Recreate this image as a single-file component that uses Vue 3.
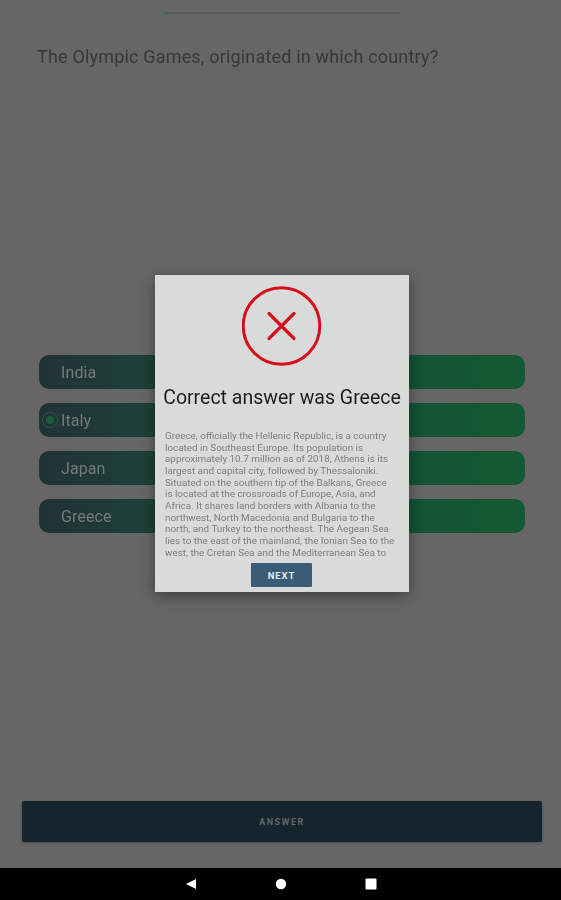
<script setup>
const options = [
  { label: 'India', selected: false },
  { label: 'Italy', selected: true },
  { label: 'Japan', selected: false },
  { label: 'Greece', selected: false },
]
const body = 'Greece, officially the Hellenic Republic, is a country located in Southeast Europe. Its population is approximately 10.7 million as of 2018, Athens is its largest and capital city, followed by Thessaloniki. Situated on the southern tip of the Balkans, Greece is located at the crossroads of Europe, Asia, and Africa. It shares land borders with Albania to the northwest, North Macedonia and Bulgaria to the north, and Turkey to the northeast. The Aegean Sea lies to the east of the mainland, the Ionian Sea to the west, the Cretan Sea and the Mediterranean Sea to'
</script>

<template>
  <div class="screen">
    <main class="page">
      <div class="progress"><span class="progress-fill"></span></div>
      <h1 class="question">The Olympic Games, originated in which country?</h1>
      <div class="options">
        <div v-for="o in options" :key="o.label" class="option">
          <span class="radio" :class="{ on: o.selected }"><i v-if="o.selected"></i></span>
          <span class="option-label">{{ o.label }}</span>
        </div>
      </div>
      <div class="answer">ANSWER</div>

      <div class="dialog">
        <svg class="fail" width="80" height="80" viewBox="0 0 80 80" aria-hidden="true">
          <circle cx="39.5" cy="40" r="38.3" fill="none" stroke="#d5101c" stroke-width="3" />
          <path d="M27 27.5 L52 52.5 M52 27.5 L27 52.5" fill="none" stroke="#d5101c" stroke-width="3.2" stroke-linecap="round" />
        </svg>
        <h2 class="title">Correct answer was Greece</h2>
        <div class="body-clip"><p class="body">{{ body }}</p></div>
        <div class="next">NEXT</div>
      </div>
    </main>
    <nav class="navbar">
      <svg width="12" height="12" viewBox="0 0 12 12" aria-hidden="true"><path d="M11 1 V11 L1 6 Z" fill="#fff" /></svg>
      <svg width="12" height="12" viewBox="0 0 12 12" aria-hidden="true"><circle cx="6" cy="6" r="5.2" fill="#fff" /></svg>
      <svg width="12" height="12" viewBox="0 0 12 12" aria-hidden="true"><rect x="0.5" y="0.5" width="11" height="11" rx="1" fill="#fff" /></svg>
    </nav>
  </div>
</template>

<style>
html, body { margin: 0; background: #000; }
</style>

<style scoped>
.screen {
  width: 561px;
  height: 900px;
  display: flex;
  flex-direction: column;
  font-family: Roboto, "Liberation Sans", sans-serif;
  overflow: hidden;
}
.page {
  position: relative;
  height: 868px;
  box-sizing: border-box;
  background: #666666;
  padding-top: 12px;
  display: flex;
  flex-direction: column;
}
.progress {
  width: 238px;
  height: 2px;
  margin-left: 162px;
  background: #595b5a;
  filter: blur(0.4px);
}
.progress-fill {
  display: block;
  width: 3px;
  height: 2px;
  background: #1f8a5c;
}
.question {
  margin: 30px 0 0 37px;
  font-size: 18px;
  line-height: 26px;
  font-weight: 400;
  letter-spacing: 0.18px;
  color: #383838;
  white-space: nowrap;
  filter: blur(0.6px);
}
.options {
  margin: 285px 36px 0 39px;
  display: flex;
  flex-direction: column;
  gap: 14px;
}
.option {
  height: 34px;
  border-radius: 10px;
  background: linear-gradient(90deg, #223236 0%, #1a4438 28%, #135a33 100%);
  display: flex;
  align-items: center;
  padding-left: 3px;
}
.radio {
  width: 16px;
  height: 16px;
  margin-right: 3px;
  box-sizing: border-box;
  border-radius: 50%;
  display: flex;
  align-items: center;
  justify-content: center;
}
.radio.on { border: 1.5px solid #1a5c3c; filter: blur(0.6px); }
.radio i {
  display: block;
  width: 8px;
  height: 8px;
  border-radius: 50%;
  background: #1a5c3c;
}
.option-label {
  font-size: 16px;
  color: #737a7b;
  letter-spacing: 0.1px;
  filter: blur(0.6px);
}
.answer {
  margin: 268px 19px 0 22px;
  height: 41px;
  border-radius: 2px;
  background: #16242d;
  box-shadow: 0 1px 3px rgba(0, 0, 0, 0.3);
  color: #5f676b;
  font-size: 9px;
  font-weight: 700;
  letter-spacing: 1.5px;
  display: flex;
  align-items: center;
  justify-content: center;
}
.dialog {
  position: absolute;
  left: 155px;
  top: 275px;
  width: 254px;
  height: 317px;
  box-sizing: border-box;
  padding-top: 11px;
  background: #d9dbda;
  box-shadow: 0 4px 14px rgba(0, 0, 0, 0.4);
  display: flex;
  flex-direction: column;
  align-items: center;
}
.title {
  margin: 19px 0 0;
  font-size: 19.5px;
  line-height: 26px;
  font-weight: 400;
  letter-spacing: 0;
  color: #1c1c1c;
  white-space: nowrap;
  filter: blur(0.3px);
}
.body-clip {
  margin-top: 19px;
  align-self: flex-start;
  margin-left: 10px;
  width: 230px;
  height: 129px;
}
.body {
  margin: 0;
  font-size: 9.9px;
  line-height: 11.66px;
  color: #7a7e7f;
  filter: blur(0.45px);
}
.next {
  margin-top: 4px;
  margin-right: 1px;
  width: 61px;
  height: 24px;
  border-radius: 1px;
  background: #3a5c78;
  color: #e6ecef;
  font-size: 9.5px;
  font-weight: 700;
  letter-spacing: 0.9px;
  display: flex;
  align-items: center;
  justify-content: center;
}
.navbar {
  height: 32px;
  background: #000;
  display: flex;
  align-items: center;
  justify-content: center;
  gap: 78px;
}
</style>
